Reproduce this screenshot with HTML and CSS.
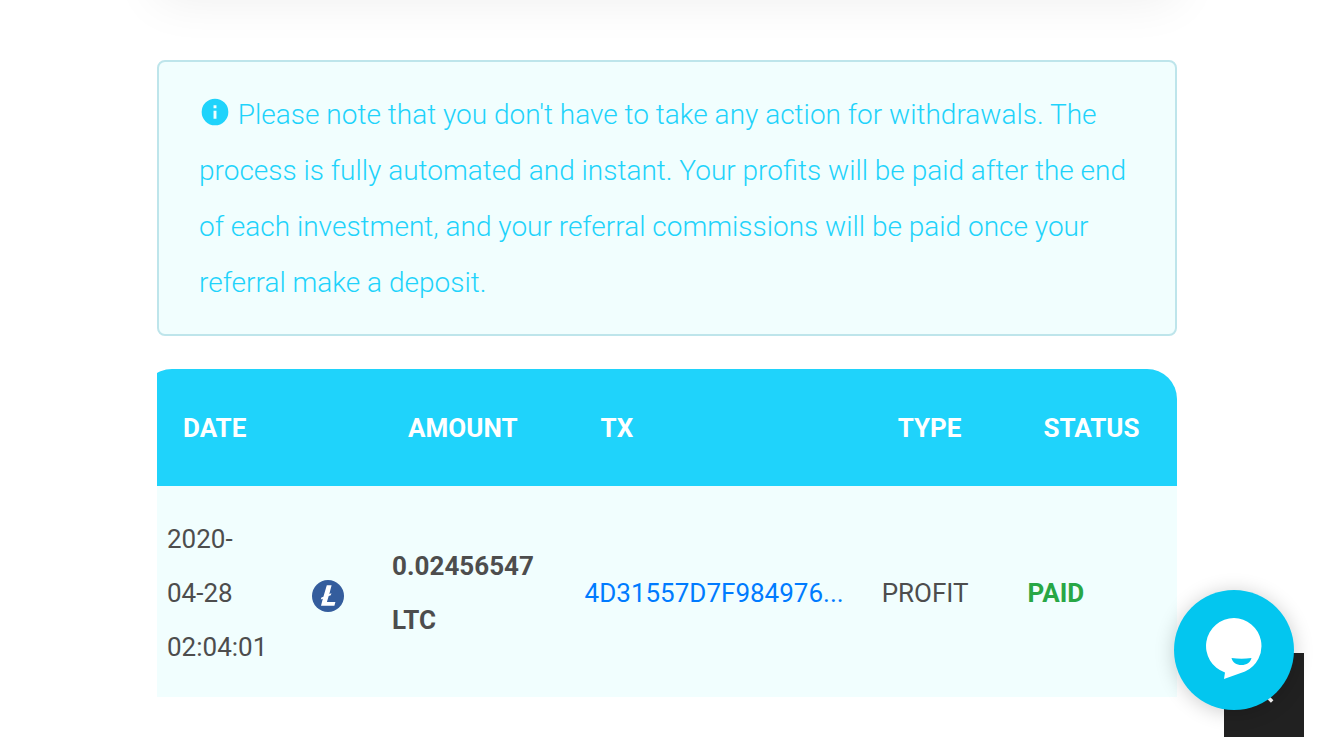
FILE: index.html
```html
<!DOCTYPE html>
<html lang="en">
<head>
<meta charset="utf-8">
<meta name="viewport" content="width=device-width, initial-scale=1">
<title>Withdrawals</title>
<link rel="stylesheet" href="styles.css">
</head>
<body>
<div class="page">
  <div class="panel"></div>
  <p class="notice"><svg class="notice-icon" viewBox="0 0 24 24" aria-hidden="true"><path fill="currentColor" fill-rule="evenodd" d="M12 2a10 10 0 1 0 0 20 10 10 0 0 0 0-20zm-1.100 5h2.200v2.200h-2.200zm0 4h2.200v6h-2.200z"/></svg> Please note that you don't have to take any action for withdrawals. The process is fully automated and instant. Your profits will be paid after the end of each investment, and your referral commissions will be paid once your referral make a deposit.</p>
  <div class="table-wrap">
    <table class="payments">
      <colgroup><col class="c-date"><col class="c-coin"><col class="c-amount"><col class="c-tx"><col class="c-type"><col class="c-status"></colgroup>
      <thead>
        <tr><th>DATE</th><td></td><th>AMOUNT</th><th>TX</th><th>TYPE</th><th>STATUS</th></tr>
      </thead>
      <tbody>
        <tr>
          <td>2020-<br>04-28<br>02:04:01</td>
          <td><svg class="coin" viewBox="0 0 32 32" role="img" aria-label="Litecoin"><circle cx="16" cy="16" r="16" fill="#345d9d"/><path fill="#fff" d="M14.800 5.200h4.800l-2.300 8.800 2.100-.8-.6 2-2.100.8-1.800 6h8.500l-1 3.800H9l1.800-7-2 .8.600-2.100 2-.8z"/></svg></td>
          <td><b>0.02456547 LTC</b></td>
          <td><a href="#tx">4D31557D7F984976...</a></td>
          <td>PROFIT</td>
          <td><b class="paid">PAID</b></td>
        </tr>
      </tbody>
    </table>
  </div>
</div>
<button class="to-top" type="button" aria-label="Back to top"><svg viewBox="0 0 24 24" aria-hidden="true"><path d="M5 17.500l7-7 7 7" fill="none" stroke="#fff" stroke-width="3"/></svg></button>
<button class="chat" type="button" aria-label="Open chat"><svg viewBox="0 0 60 64" aria-hidden="true"><path fill="#fff" d="M30 0a28 28 0 0 1 11 53.500L20 61l1-6.500A28 28 0 0 1 30 0z"/><path fill="#03c6ef" d="M27.500 40q10 1.500 20 0c-1 4.500-5 7-10 7s-9-2.500-10-7z"/></svg></button>
</body>
</html>
```
FILE: styles.css
```css
* { box-sizing: border-box; }
body {
  margin: 0;
  background: #fff;
  color: #4d4d4d;
  font-family: Roboto, sans-serif;
  font-size: 26px;
  line-height: 54px;
}
.page {
  max-width: 1020px;
  margin: 0 auto;
}
.panel {
  height: 100px;
  margin-top: -100px;
  box-shadow: 0 0 50px rgba(0, 0, 0, 0.07);
}
.notice {
  margin: 60px 0 33px;
  padding: 25px 40px 23px;
  border: 2px solid #bee5eb;
  border-radius: 8px;
  background: #f1fefe;
  color: #1fd3fb;
  font-size: 28px;
  font-weight: 300;
  line-height: 56px;
}
.notice-icon {
  width: 32px;
  height: 32px;
  vertical-align: -4px;
}
.table-wrap { overflow: hidden; }
.payments {
  width: calc(100% + 15px);
  margin-left: -15px;
  table-layout: fixed;
  border-collapse: separate;
  border-spacing: 0;
}
.c-date { width: 15.5%; }
.c-coin { width: 7.7%; }
.c-amount { width: 18.6%; }
.c-tx { width: 28.7%; }
.c-type { width: 14.1%; }
.c-status { width: 15.4%; }
thead th, thead td {
  padding: 32px 0 31px 26px;
  background: #1fd3fb;
  color: #fff;
  font-weight: 700;
  text-align: left;
}
thead tr > :first-child {
  padding-left: 41px;
  border-top-left-radius: 30px;
}
thead tr > :last-child { border-top-right-radius: 30px; }
tbody td {
  padding: 26px 10px 23px;
  background: #f1fefe;
}
tbody td:first-child { padding-left: 25px; }
.payments a {
  color: #007bff;
  text-decoration: none;
}
.paid { color: #28a745; }
.coin {
  display: block;
  width: 32px;
  height: 32px;
  margin-top: 6px;
}
.to-top, .chat {
  position: fixed;
  display: flex;
  align-items: center;
  justify-content: center;
  padding: 0;
  border: 0;
}
.to-top {
  right: 30px;
  bottom: 13px;
  width: 80px;
  height: 84px;
  background: #212121;
}
.to-top svg { width: 28px; }
.chat {
  right: 40px;
  bottom: 40px;
  width: 120px;
  height: 120px;
  border-radius: 50%;
  background: #03c6ef;
  box-shadow: 0 2px 20px rgba(0, 0, 0, 0.2);
}
.chat svg { width: 60px; height: 64px; }
```
